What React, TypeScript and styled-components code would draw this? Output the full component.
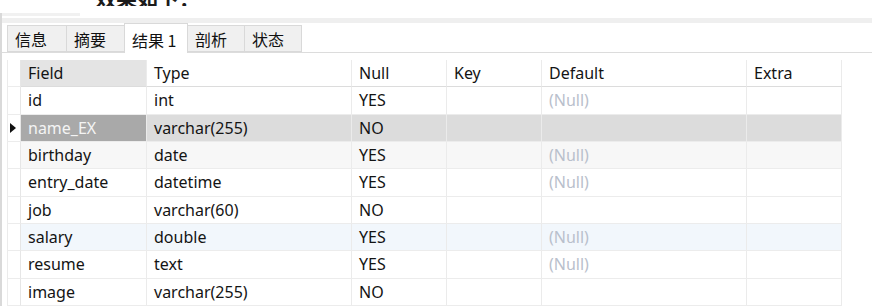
import styled, { createGlobalStyle } from "styled-components";

const GlobalStyle = createGlobalStyle`
  html, body {
    margin: 0;
    padding: 0;
    background: #fff;
  }
  body {
    font-family: "Noto Sans", "Noto Sans CJK SC", sans-serif;
    color: #111;
  }
`;

const Page = styled.div`
  width: 872px;
  height: 306px;
  overflow: hidden;
  background: #fff;
`;

const TitleClip = styled.div`
  height: 6px;
  overflow: hidden;
  display: flex;
  align-items: flex-end;
  padding-left: 95px;
`;

const TitleText = styled.div`
  font-family: "Noto Sans CJK SC", sans-serif;
  font-weight: 700;
  font-size: 21px;
  line-height: 22px;
  flex-shrink: 0;
  margin-bottom: -2px;
  color: #1b1b1b;
`;

const Frame = styled.div`
  margin-top: 7px;
  border-left: 2px solid #d9d9d9;
`;

const TopStrip = styled.div`
  height: 5px;
  display: flex;
`;

const StripPiece = styled.div`
  width: 78px;
  height: 3px;
  background: #f1f1f1;
`;

const Band = styled.div`
  height: 5px;
  background: #efefef;
`;

const TabBar = styled.div`
  height: 29px;
  display: flex;
  align-items: flex-end;
  padding-left: 6px;
  border-bottom: 1px solid #dcdcdc;
`;

const Tab = styled.div<{ $active?: boolean; $w: number }>`
  box-sizing: border-box;
  width: ${(p) => p.$w}px;
  height: ${(p) => (p.$active ? 30 : 27)}px;
  margin-bottom: ${(p) => (p.$active ? -1 : 0)}px;
  padding-left: 7px;
  padding-top: ${(p) => (p.$active ? 2 : 0)}px;
  display: flex;
  align-items: center;
  font-family: "Noto Sans CJK SC", sans-serif;
  font-size: 16px;
  color: #111;
  background: ${(p) => (p.$active ? "#fff" : "#f0f0f0")};
  border: 1px solid #d9d9d9;
  border-bottom: ${(p) => (p.$active ? "none" : "1px solid #d9d9d9")};
  margin-left: -1px;
`;

const Grid = styled.div`
  margin: 7px 0 0 5px;
  display: grid;
  grid-template-columns: 14px 126px 205px 95px 95px 205px 95px;
  grid-auto-rows: 27.33px;
  width: 835px;
`;

const Row = styled.div<{ $bg?: string }>`
  display: contents;
  & > div {
    background: ${(p) => p.$bg ?? "#fff"};
  }
  & > div:first-child {
    background: #fff;
  }
`;

const Cell = styled.div<{ $header?: boolean }>`
  box-sizing: border-box;
  display: flex;
  align-items: center;
  padding-left: 7px;
  font-size: 16px;
  white-space: nowrap;
  color: #141414;
  border-right: 1px solid #ebebeb;
  border-bottom: 1px solid ${(p) => (p.$header ? "#dcdcdc" : "#ececec")};
`;

const HeadCell = styled(Cell)<{ $current?: boolean }>`
  && {
    background: ${(p) => (p.$current ? "#e4e4e4" : "#fff")};
  }
`;

const IndicatorCell = styled.div`
  box-sizing: border-box;
  border-left: 1px solid #ebebeb;
  border-right: 1px solid #e6e6e6;
  border-bottom: 1px solid #ececec;
  display: flex;
  align-items: center;
  padding-left: 2px;
`;

const Arrow = styled.span`
  width: 0;
  height: 0;
  border-top: 5px solid transparent;
  border-bottom: 5px solid transparent;
  border-left: 6px solid #111;
`;

const ValueCell = styled(Cell)<{ $muted?: boolean; $picked?: boolean }>`
  color: ${(p) => (p.$muted ? "#b9c0cc" : p.$picked ? "#f4f4f4" : "#141414")};
  && {
    ${(p) => (p.$picked ? "background: #a9a9a9;" : "")}
  }
`;

type Col = { field: string; type: string; nul: string; def: boolean; bg?: string; current?: boolean };

const rows: Col[] = [
  { field: "id", type: "int", nul: "YES", def: true },
  { field: "name_EX", type: "varchar(255)", nul: "NO", def: false, bg: "#dcdcdc", current: true },
  { field: "birthday", type: "date", nul: "YES", def: true, bg: "#f7f7f7" },
  { field: "entry_date", type: "datetime", nul: "YES", def: true },
  { field: "job", type: "varchar(60)", nul: "NO", def: false },
  { field: "salary", type: "double", nul: "YES", def: true, bg: "#f2f7fc" },
  { field: "resume", type: "text", nul: "YES", def: true },
  { field: "image", type: "varchar(255)", nul: "NO", def: false },
];

const tabs = [
  { label: "信息", w: 60 },
  { label: "摘要", w: 59 },
  { label: "结果 1", w: 64, active: true },
  { label: "剖析", w: 58 },
  { label: "状态", w: 58 },
];

const App = () => (
  <Page>
    <GlobalStyle />
    <TitleClip>
      <TitleText>效果如下：</TitleText>
    </TitleClip>
    <Frame>
      <TopStrip>
        <StripPiece />
      </TopStrip>
      <Band />
      <TabBar>
        {tabs.map((t) => (
          <Tab key={t.label} $w={t.w} $active={t.active}>
            {t.label}
          </Tab>
        ))}
      </TabBar>
      <Grid>
        <Row>
          <IndicatorCell />
          <HeadCell $header $current>Field</HeadCell>
          <HeadCell $header>Type</HeadCell>
          <HeadCell $header>Null</HeadCell>
          <HeadCell $header>Key</HeadCell>
          <HeadCell $header>Default</HeadCell>
          <HeadCell $header>Extra</HeadCell>
        </Row>
        {rows.map((r) => (
          <Row key={r.field} $bg={r.bg}>
            <IndicatorCell>{r.current && <Arrow />}</IndicatorCell>
            <ValueCell $picked={r.current}>{r.field}</ValueCell>
            <ValueCell>{r.type}</ValueCell>
            <ValueCell>{r.nul}</ValueCell>
            <ValueCell />
            <ValueCell $muted>{r.def ? "(Null)" : ""}</ValueCell>
            <ValueCell />
          </Row>
        ))}
      </Grid>
    </Frame>
  </Page>
);

export default App;
